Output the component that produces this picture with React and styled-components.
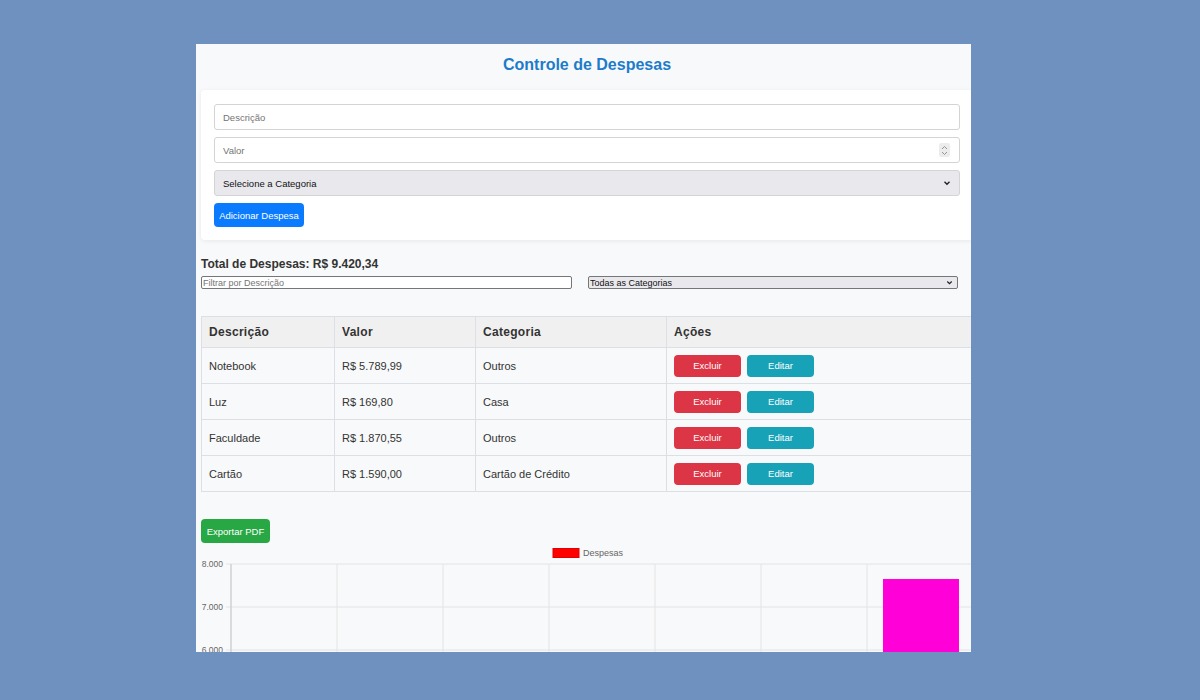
import styled, { createGlobalStyle } from 'styled-components';

const GlobalStyle = createGlobalStyle`
    html, body {
        margin: 0;
        padding: 0;
        background: #6f91bf;
        font-family: 'Liberation Sans', Arial, sans-serif;
    }
    * {
        box-sizing: border-box;
    }
`;

const despesas = [
    { descricao: 'Notebook', valor: 'R$ 5.789,99', categoria: 'Outros' },
    { descricao: 'Luz', valor: 'R$ 169,80', categoria: 'Casa' },
    { descricao: 'Faculdade', valor: 'R$ 1.870,55', categoria: 'Outros' },
    { descricao: 'Cartão', valor: 'R$ 1.590,00', categoria: 'Cartão de Crédito' },
];

export default function App() {
    return (
        <Page>
            <GlobalStyle />
            <Panel>
                <Content>
                    <Header>Controle de Despesas</Header>
                    <FormCard>
                        <FieldBox>
                            <Field type="text" placeholder="Descrição" />
                        </FieldBox>
                        <FieldBox>
                            <Field type="text" placeholder="Valor" />
                            <Spinner>
                                <svg width="7" height="11" viewBox="0 0 7 11">
                                    <path d="M1 4 L3.5 1.5 L6 4 M1 7 L3.5 9.5 L6 7" fill="none" stroke="#8a8a8a" strokeWidth="0.9" />
                                </svg>
                            </Spinner>
                        </FieldBox>
                        <FieldBox gray>
                            <Select defaultValue="">
                                <option value="">Selecione a Categoria</option>
                            </Select>
                            <Chevron />
                        </FieldBox>
                        <Button color="#0a7bff" width="90px" height="24px">Adicionar Despesa</Button>
                    </FormCard>

                    <Total>Total de Despesas: R$ 9.420,34</Total>
                    <Filters>
                        <FilterInput type="text" placeholder="Filtrar por Descrição" />
                        <FilterSelectBox>
                            <FilterSelect defaultValue="">
                                <option value="">Todas as Categorias</option>
                            </FilterSelect>
                            <Chevron small />
                        </FilterSelectBox>
                    </Filters>

                    <Table>
                        <colgroup>
                            <col style={{ width: 133 }} />
                            <col style={{ width: 141 }} />
                            <col style={{ width: 191 }} />
                            <col />
                        </colgroup>
                        <thead>
                            <tr>
                                <Th>Descrição</Th>
                                <Th>Valor</Th>
                                <Th>Categoria</Th>
                                <Th>Ações</Th>
                            </tr>
                        </thead>
                        <tbody>
                            {despesas.map(d => (
                                <tr key={d.descricao}>
                                    <Td>{d.descricao}</Td>
                                    <Td>{d.valor}</Td>
                                    <Td>{d.categoria}</Td>
                                    <Td>
                                        <Actions>
                                            <Button color="#dc3545" width="67px" height="22px">Excluir</Button>
                                            <Button color="#17a2b8" width="67px" height="22px">Editar</Button>
                                        </Actions>
                                    </Td>
                                </tr>
                            ))}
                        </tbody>
                    </Table>

                    <Button color="#28a745" width="69px" height="24px">Exportar PDF</Button>
                    <Chart />
                </Content>
            </Panel>
        </Page>
    );
}

function Chevron({ small }) {
    const s = small ? 7 : 8;
    return (
        <ChevronIcon width={s} height={s} viewBox="0 0 8 8">
            <path d="M1.5 2.8 L4 5.3 L6.5 2.8" fill="none" stroke="#222" strokeWidth="1.4" />
        </ChevronIcon>
    );
}

function Chart() {
    const grid = [19, 62, 105];
    const labels = ['8.000', '7.000', '6.000'];
    const cols = [136, 242, 348, 454, 560, 666];
    return (
        <ChartBox>
            <svg width="772" height="110" viewBox="0 0 772 110">
                <rect x="352" y="3.5" width="26" height="9" fill="#ff0000" stroke="#e00000" strokeWidth="1" />
                <text x="382" y="11" fontSize="9" fill="#666" fontFamily="Liberation Sans, Arial, sans-serif">Despesas</text>
                {grid.map((y, i) => (
                    <g key={y}>
                        <line x1="25" x2="772" y1={y} y2={y} stroke="#e4e4e4" strokeWidth="1" />
                        <text x="22" y={y + 3} fontSize="8.5" fill="#666" textAnchor="end" fontFamily="Liberation Sans, Arial, sans-serif">{labels[i]}</text>
                    </g>
                ))}
                {cols.map(x => (
                    <line key={x} x1={x} x2={x} y1="19" y2="110" stroke="#e4e4e4" strokeWidth="1" />
                ))}
                <line x1="30" x2="30" y1="19" y2="110" stroke="#d0d0d0" strokeWidth="1.5" />
                <rect x="682" y="34" width="76" height="76" fill="#ff00d8" />
            </svg>
        </ChartBox>
    );
}

const Page = styled.div`
    width: 1200px;
    height: 700px;
    padding: 44px 0 0 196px;
    overflow: hidden;
`;

const Panel = styled.div`
    width: 775px;
    height: 608px;
    background: #f8f9fa;
    overflow: hidden;
`;

const Header = styled.h1`
    margin: 0;
    height: 46px;
    padding-bottom: 4px;
    display: flex;
    align-items: center;
    justify-content: center;
    font-size: 16px;
    font-weight: 700;
    color: #1c7ccb;
`;

const Content = styled.div`
    width: 772px;
    margin-left: 5px;
`;

const FormCard = styled.div`
    background: #ffffff;
    padding: 14px 13px 13px 13px;
    display: flex;
    flex-direction: column;
    gap: 7px;
    box-shadow: 0 1px 5px rgba(0, 0, 0, 0.07);
    border-radius: 4px;
`;

const FieldBox = styled.div`
    height: 26px;
    display: flex;
    align-items: center;
    border: 1px solid #d4d4d4;
    border-radius: 3px;
    background: ${props => props.gray ? '#e9e9ed' : '#ffffff'};
    padding: 0 8px 0 0;
`;

const Field = styled.input`
    flex: 1;
    height: 100%;
    border: none;
    outline: none;
    background: transparent;
    padding: 0 8px;
    font-family: 'Liberation Sans', Arial, sans-serif;
    font-size: 9.5px;
    color: #222;

    ::placeholder {
        color: #757575;
    }
`;

const Spinner = styled.span`
    width: 11px;
    height: 14px;
    display: flex;
    align-items: center;
    justify-content: center;
    background: #ececec;
    border-radius: 2px;
    margin-right: 1px;
`;

const Select = styled.select`
    flex: 1;
    height: 100%;
    border: none;
    outline: none;
    appearance: none;
    background: transparent;
    padding: 0 8px;
    font-family: 'Liberation Sans', Arial, sans-serif;
    font-size: 9.5px;
    color: #111;
`;

const ChevronIcon = styled.svg`
    flex-shrink: 0;
`;

const Button = styled.button`
    width: ${props => props.width};
    height: ${props => props.height};
    background: ${props => props.color};
    border: none;
    border-radius: 4px;
    color: #ffffff;
    font-family: 'Liberation Sans', Arial, sans-serif;
    font-size: 9.5px;
    padding: 0;
    display: flex;
    align-items: center;
    justify-content: center;
    white-space: nowrap;
`;

const Total = styled.h3`
    margin: 17px 0 4px 0;
    font-size: 12px;
    line-height: 15px;
    font-weight: 700;
    color: #333;
`;

const Filters = styled.div`
    display: flex;
    gap: 16px;
    margin-bottom: 27px;
`;

const FilterInput = styled.input`
    width: 371px;
    height: 13px;
    border: 1px solid #767676;
    border-radius: 2px;
    padding: 0 1px;
    font-family: 'Liberation Sans', Arial, sans-serif;
    font-size: 9px;
    background: #ffffff;

    ::placeholder {
        color: #6d6d6d;
    }
`;

const FilterSelectBox = styled.div`
    width: 370px;
    height: 13px;
    display: flex;
    align-items: center;
    border: 1px solid #767676;
    border-radius: 2px;
    background: #e9e9ed;
    padding-right: 4px;
`;

const FilterSelect = styled.select`
    flex: 1;
    height: 100%;
    border: none;
    outline: none;
    appearance: none;
    background: transparent;
    padding: 0 0 0 1px;
    font-family: 'Liberation Sans', Arial, sans-serif;
    font-size: 9px;
    color: #111;
`;

const Table = styled.table`
    width: 772px;
    border-collapse: collapse;
    table-layout: fixed;
    margin-bottom: 27px;
`;

const Th = styled.th`
    height: 31px;
    background: #f0f0f0;
    border: 1px solid #dcdfe3;
    padding: 0 7px;
    text-align: left;
    font-size: 12px;
    font-weight: 700;
    letter-spacing: 0.3px;
    color: #333;
`;

const Td = styled.td`
    height: 36px;
    border: 1px solid #dcdfe3;
    padding: 0 7px;
    font-size: 11px;
    color: #333;
`;

const Actions = styled.div`
    display: flex;
    gap: 6px;
`;

const ChartBox = styled.div`
    margin-top: 2px;
    height: 110px;
`;
